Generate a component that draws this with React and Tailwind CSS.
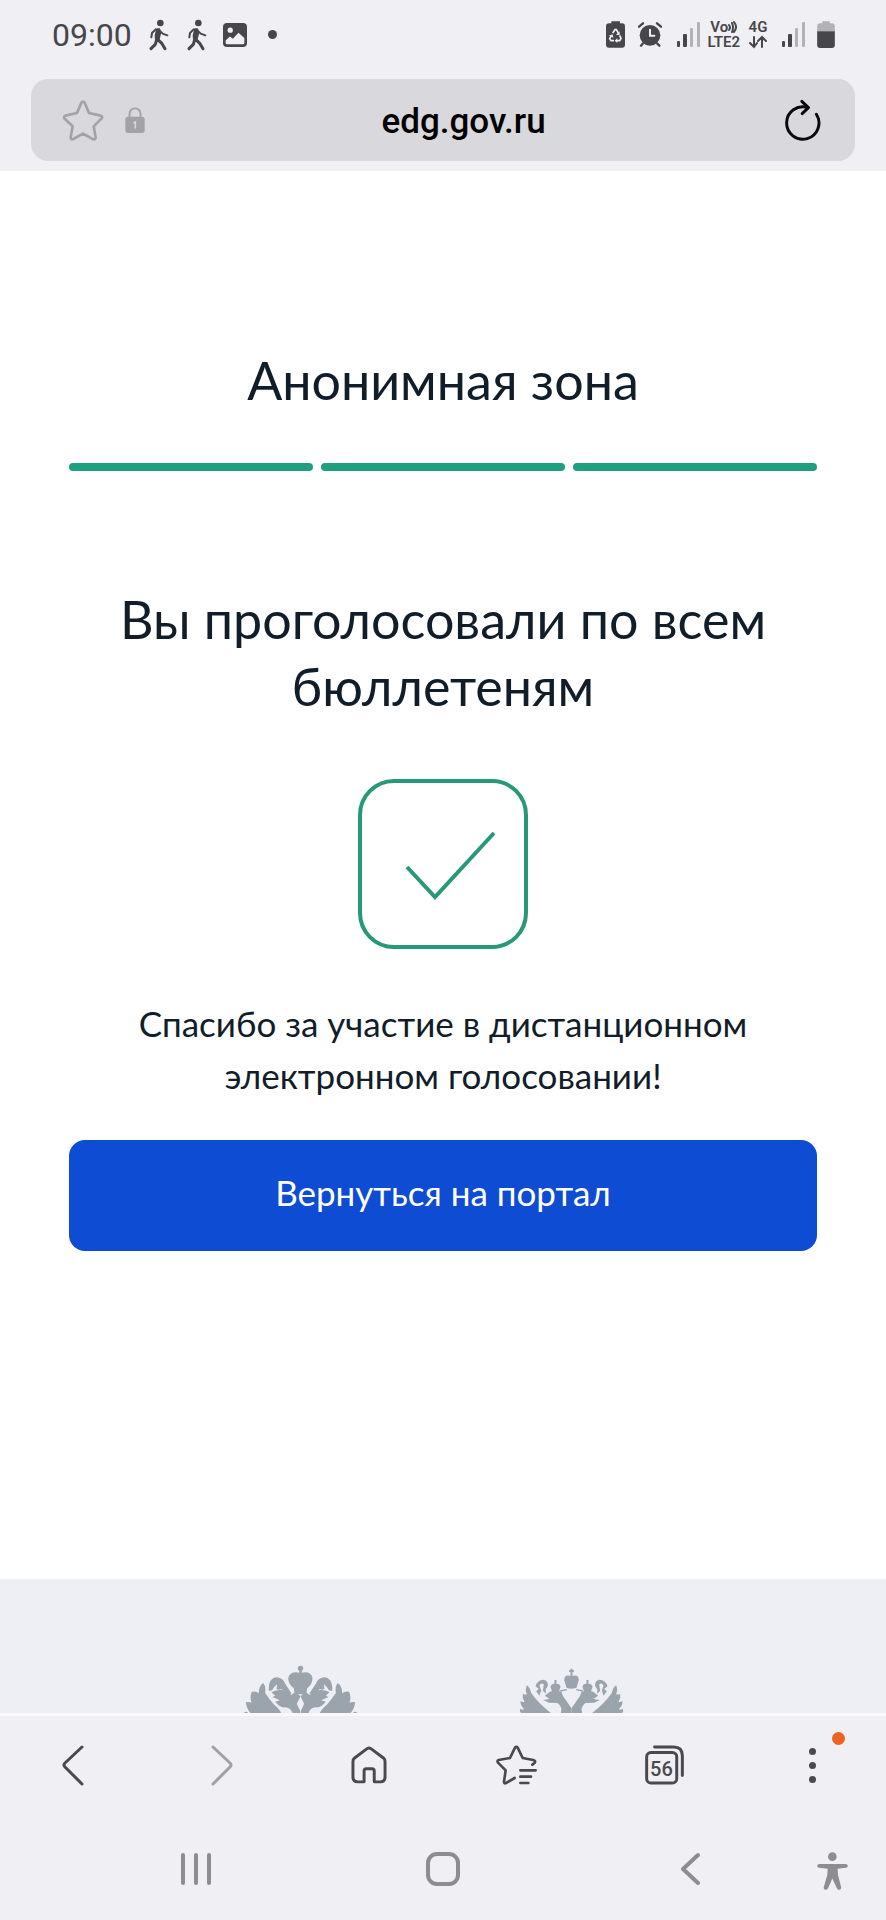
import clsx from 'clsx';

const STEPS = [1, 2, 3];

function WalkIcon() {
  return (
    <svg viewBox="440 51 63 99" className="w-[21px] h-[33px]" fill="none" stroke="#47464b" strokeLinecap="round" strokeLinejoin="round">
      <circle cx="477" cy="66" r="10" fill="#47464b" stroke="none" />
      <path d="M467 85 L474 85 L476 98 L472 115 L464 116 L463 104Z" fill="#47464b" strokeWidth="6" />
      <path d="M463 85 L452 96 L450 109 M476 90 L484 98 L498 103" strokeWidth="6" />
      <path d="M466 116 L462 130 L449 143 M469 115 L482 128 L491 143" strokeWidth="9" />
    </svg>
  );
}

function PictureIcon() {
  return (
    <svg viewBox="666 66 73 73" className="w-6 h-6">
      <rect x="666" y="66" width="73" height="73" rx="12" fill="#47464b" />
      <circle cx="688" cy="88" r="8" fill="#f0eff4" />
      <path d="M674 119 L687 107 L696 114 L713 96 L731 112 V126 Q731 131 726 131 H679 Q674 131 674 126Z" fill="#f0eff4" />
    </svg>
  );
}

function BatterySaverIcon() {
  return (
    <svg viewBox="488 62 57 81" className="w-[19px] h-[27px]">
      <path d="M504 63 H530 V69 H536 Q545 69 545 79 V133 Q545 142 536 142 H497 Q488 142 488 133 V79 Q488 69 497 69 H504Z" fill="#47464b" />
      <g fill="none" stroke="#f0eff4" strokeWidth="5">
        <path d="M508 98 L515 88 H519 L525 98" />
        <path d="M529 105 L533 114 L529 121 H519" />
        <path d="M512 121 H503 L499 115 L504 106" />
      </g>
      <path d="M529 93 V104 H518Z M522 114 V128 L514 121Z M497 106 L508 102 L510 112Z" fill="#f0eff4" />
    </svg>
  );
}

function AlarmIcon() {
  return (
    <svg viewBox="585 65 72 75" className="w-6 h-[25px]" fill="none" strokeLinecap="round">
      <circle cx="621" cy="105" r="31" fill="#47464b" />
      <path d="M588 79 L600 69 M654 79 L642 69 M599 130 L594 136 M643 130 L649 136" stroke="#47464b" strokeWidth="7" />
      <path d="M621 88 V106 H634" stroke="#f0eff4" strokeWidth="6" />
    </svg>
  );
}

function SignalIcon() {
  return (
    <svg viewBox="0 0 23 25" className="w-[23px] h-[25px]">
      <rect x="0" y="19" width="3" height="6" rx="1" fill="#47464b" />
      <rect x="6" y="12" width="4" height="13" rx="1" fill="#47464b" />
      <rect x="13" y="6" width="3" height="19" rx="1" fill="#b3b2b7" />
      <rect x="20" y="0" width="3" height="25" rx="1" fill="#b3b2b7" />
    </svg>
  );
}

function BatteryIcon() {
  return (
    <svg viewBox="1122 62 53 81" className="w-[18px] h-[27px]">
      <path d="M1137 63 H1160 V69 H1166 Q1175 69 1175 78 V93 H1122 V78 Q1122 69 1131 69 H1137Z" fill="#b3b2b7" />
      <path d="M1122 93 H1175 V134 Q1175 143 1166 143 H1131 Q1122 143 1122 134Z" fill="#47464b" />
    </svg>
  );
}

function StatusBar() {
  return (
    <div className="flex items-center justify-between h-[69px] pl-[52px] pr-[51px] text-[#47464b]">
      <div className="flex items-center">
        <span className="text-[32px] leading-8 mr-4">09:00</span>
        <span className="flex gap-[17px]">
          <WalkIcon />
          <WalkIcon />
        </span>
        <span className="ml-4 mr-[21px]">
          <PictureIcon />
        </span>
        <span className="w-[9px] h-[9px] rounded-full bg-[#47464b]" />
      </div>
      <div className="flex items-center">
        <BatterySaverIcon />
        <span className="ml-[13px] mr-[15px]">
          <AlarmIcon />
        </span>
        <SignalIcon />
        <span className="flex flex-col items-center ml-[7px] mr-2 text-[15px] leading-[15px] font-semibold">
          <span className="flex items-center">
            Vo
            <svg viewBox="0 0 9 12" className="w-[9px] h-3" fill="none" stroke="#47464b" strokeLinecap="round">
              <path d="M1 4 Q3 6.500 1 9 M4 2 Q6 6.500 4 11 M6 1 Q10 6 6 11" strokeWidth="2" />
            </svg>
          </span>
          <span>LTE2</span>
        </span>
        <span className="flex flex-col items-center mr-[14px] text-[15px] leading-[15px] font-semibold">
          4G
          <svg viewBox="0 0 20 14" className="w-5 h-[14px]" fill="none" stroke="#47464b" strokeWidth="2" strokeLinecap="round">
            <path d="M6 2 V12 M2 8 L6 12 L9 8 M14 12 V2 M10 6 L14 2 L18 6" />
          </svg>
        </span>
        <SignalIcon />
        <span className="ml-3">
          <BatteryIcon />
        </span>
      </div>
    </div>
  );
}

function AddressBar() {
  return (
    <div className="flex items-center h-[82px] mx-[31px] pl-[31px] pr-[34px] rounded-[17px] bg-[#d9d8dd]">
      <div className="flex flex-1 items-center gap-[21px]">
        <button aria-label="Добавить в закладки">
          <svg viewBox="184 298 126 123" className="w-[42px] h-[41px]" fill="none" stroke="#a3a2a7" strokeWidth="8" strokeLinejoin="round">
            <path d="M242 306 Q247 299 252 306 L265 337 L300 345 Q308 349 302 354 L279 377 L285 411 Q284 418 276 415 L247 399 L218 415 Q210 418 210 410 L216 377 L192 354 Q187 348 194 345 L229 337Z" />
          </svg>
        </button>
        <svg viewBox="371 320 62 80" className="w-5 h-[26px]">
          <path d="M385 354 V342 Q386 324 402 324 Q418 324 419 342 V354" fill="none" stroke="#a3a2a7" strokeWidth="6" />
          <rect x="372" y="350" width="60" height="50" rx="8" fill="#a3a2a7" />
          <path d="M397 369 L403 366 V386" fill="none" stroke="#d9d8dd" strokeWidth="5" />
        </svg>
      </div>
      <span className="pl-11 pt-1 text-[35px] leading-10 font-medium text-black">edg.gov.ru</span>
      <div className="flex flex-1 justify-end">
        <button aria-label="Обновить">
          <svg viewBox="1027 291 109 128" className="w-9 h-[43px]" fill="none" stroke="#0a0a0a" strokeWidth="9" strokeLinecap="round" strokeLinejoin="round">
            <path d="M1122 336 A49 49 0 1 1 1096 316" />
            <path d="M1078 297 L1098 316 L1079 334" />
          </svg>
        </button>
      </div>
    </div>
  );
}

function ForeignCommissionEmblem() {
  const half = (
    <>
      <path d="M240 218 H148 Q136 206 134 186 Q145 183 151 188 Q145 169 152 154 Q164 151 173 159 Q172 139 186 128 Q195 137 192 158 Q205 178 219 193 Q235 206 240 218Z" />
      <path d="M128 218 Q134 210 141 218Z" />
      <path d="M203 152 Q200 113 228 111 Q246 114 252 130 L272 160 L258 160 L240 146 Q234 151 226 146 L228 132 Q217 140 213 150Z" />
      <path d="M211 156 Q224 148 240 149 Q260 150 270 164 L284 154 L298 168 L287 190 L297 212 V218 H274 Q268 202 252 201 Q242 203 232 195 L222 184 L236 180 L214 170 L222 166Z" />
    </>
  );
  return (
    <svg viewBox="126 74 344 144" className="w-[115px] h-12" fill="#9ba4ac">
      {half}
      <g transform="translate(596 0) scale(-1 1)">{half}</g>
      <circle cx="298" cy="84" r="8" />
      <path d="M294 90 H302 V97 Q330 92 334 114 Q333 134 318 144 L316 158 Q298 166 280 158 L278 144 Q262 134 261 114 Q266 92 294 97Z" />
    </svg>
  );
}

function EagleEmblem() {
  const half = (
    <>
      <path d="M1050 218 H960 Q955 212 958 205 Q966 210 970 206 Q958 196 959 182 Q967 187 971 184 Q963 172 966 160 Q973 164 978 162 Q972 148 978 135 Q988 142 991 158 Q1012 188 1050 218Z" />
      <path d="M1004 138 Q1010 118 1028 118 Q1043 121 1041 137 L1034 148 L1036 160 L1026 152 L1029 132 Q1020 126 1016 136 L1021 150 L1016 166 L1006 153 L1014 146Z" />
      <path d="M1061 119 H1067 V130 Q1078 130 1079 139 L1074 155 H1054 L1049 139 Q1051 130 1061 130Z" />
      <path d="M1032 166 L1047 154 Q1064 148 1082 154 L1086 166 Q1096 180 1112 204 V218 H1080 Q1086 200 1070 188 L1044 187 L1027 179 L1046 176Z" />
    </>
  );
  return (
    <svg viewBox="955 83 314 135" className="w-[105px] h-[45px]" fill="#9ba4ac">
      {half}
      <g transform="translate(2224 0) scale(-1 1)">{half}</g>
      <path d="M1109 85 H1115 V89 H1119 V95 H1115 V107 Q1133 102 1134 119 L1127 142 Q1112 148 1097 142 L1090 119 Q1091 102 1109 107 V95 H1105 V89 H1109Z" />
      <path d="M1078 152 L1098 148 M1146 152 L1126 148" stroke="#9ba4ac" strokeWidth="4" />
    </svg>
  );
}

function BrowserToolbar() {
  const slot = 'flex justify-center items-center';
  return (
    <nav className="grid grid-cols-6 h-[98px] shrink-0">
      <button className={slot} aria-label="Назад">
        <svg viewBox="0 0 24 42" className="w-6 h-[42px]" fill="none" stroke="#4a494e" strokeWidth="3" strokeLinecap="round" strokeLinejoin="round">
          <path d="M20 3 L3 19 Q1 21 3 23 L20 40" />
        </svg>
      </button>
      <button className={slot} aria-label="Вперёд" disabled>
        <svg viewBox="0 0 24 42" className="w-6 h-[42px]" fill="none" stroke="#a1a0a5" strokeWidth="3" strokeLinecap="round" strokeLinejoin="round">
          <path d="M4 3 L21 19 Q23 21 21 23 L4 40" />
        </svg>
      </button>
      <button className={slot} aria-label="Домой">
        <svg viewBox="1054 108 110 115" className="w-9 h-[38px]" fill="none" stroke="#4a494e" strokeWidth="9" strokeLinejoin="round">
          <path d="M1101 117 Q1109 110 1117 117 L1153 144 Q1158 148 1158 155 V202 Q1158 217 1144 217 H1125 V184 Q1125 177 1118 177 H1101 Q1094 177 1094 184 V217 H1074 Q1060 217 1060 202 V155 Q1060 148 1065 144Z" />
        </svg>
      </button>
      <button className={slot} aria-label="Закладки">
        <svg viewBox="161 106 123 120" className="w-[41px] h-10" fill="none" stroke="#4a494e" strokeWidth="8" strokeLinecap="round" strokeLinejoin="round">
          <path d="M217 205 L191 220 Q185 223 185 216 L190 182 L167 159 Q163 153 169 151 L203 145 L218 114 Q222 109 226 114 L241 145 L273 151 Q281 153 277 159 L270 165" />
          <path d="M234 182 H280 M234 201 H266 M234 220 H258" />
        </svg>
      </button>
      <button className={slot} aria-label="Вкладки">
        <span className="relative flex">
          <svg viewBox="605 103 118 119" className="w-[39px] h-10" fill="none" stroke="#4a494e" strokeWidth="9" strokeLinecap="round">
            <rect x="610" y="125" width="91" height="92" rx="13" />
            <path d="M634 108 H692 Q718 108 718 134 V194" />
          </svg>
          <span className="absolute left-0 bottom-0 w-[33px] h-8 flex items-center justify-center text-[20px] leading-5 font-medium text-[#4a494e]">56</span>
        </span>
      </button>
      <button className={slot} aria-label="Меню">
        <span className="relative flex flex-col gap-[7px]">
          {[0, 1, 2].map((dot) => (
            <span key={dot} className="w-[7px] h-[7px] rounded-full bg-[#4a494e]" />
          ))}
          <span className="absolute -top-4 left-[23px] w-[13px] h-[13px] rounded-full bg-[#ef6221]" />
        </span>
      </button>
    </nav>
  );
}

function SystemNav() {
  const slot = 'flex justify-center items-center';
  return (
    <nav className="grid grid-cols-[73px_1fr_1fr_1fr_73px] h-[106px] pt-1 shrink-0">
      <span />
      <button className={clsx(slot, 'gap-[9px]')} aria-label="Недавние приложения">
        {[0, 1, 2].map((bar) => (
          <span key={bar} className="w-1 h-8 rounded-full bg-[#8d8c91]" />
        ))}
      </button>
      <button className={slot} aria-label="Главный экран">
        <span className="w-[34px] h-[34px] rounded-[11px] border-4 border-[#8d8c91]" />
      </button>
      <button className={slot} aria-label="Назад">
        <svg viewBox="0 0 20 34" className="w-5 h-[34px]" fill="none" stroke="#8d8c91" strokeWidth="4" strokeLinecap="round" strokeLinejoin="round">
          <path d="M18 3 L3 17 L18 31" />
        </svg>
      </button>
      <button className="flex items-center pl-1 pt-1" aria-label="Специальные возможности">
        <svg viewBox="1122 425 93 115" className="w-[31px] h-[38px]" fill="#8d8c91">
          <circle cx="1168" cy="439" r="13" />
          <path d="M1128 461 H1209 Q1215 462 1215 467 Q1215 472 1209 473 L1184 476 L1185 494 L1195 533 Q1194 540 1188 539 Q1184 540 1182 535 L1168 505 L1155 535 Q1153 540 1148 539 Q1141 539 1142 532 L1153 494 L1154 476 L1128 473 Q1122 472 1122 467 Q1122 462 1128 461Z" />
        </svg>
      </button>
    </nav>
  );
}

export default function App() {
  return (
    <div className="flex flex-col min-h-screen bg-[#f0eff4] font-['Roboto',sans-serif]">
      <header className="pb-[10px] shrink-0">
        <StatusBar />
        <div className="pt-[10px]">
          <AddressBar />
        </div>
      </header>

      <main className="flex-1 bg-white px-[69px] pt-44 pb-20 text-center text-[#111d29] font-['Lato',sans-serif]">
        <h1 className="text-[52px] leading-[67px]">Анонимная зона</h1>
        <div className="flex gap-2 mt-[49px]">
          {STEPS.map((step) => (
            <span key={step} className="flex-1 h-2 rounded-full bg-[#1f9f7f]" />
          ))}
        </div>

        <h2 className="mt-[115px] text-[52px] leading-[67px]">Вы проголосовали по всем бюллетеням</h2>
        <div className="w-[170px] h-[170px] mt-[59px] mx-auto rounded-[36px] border-4 border-[#279879]">
          <svg viewBox="0 0 162 162" className="w-full h-full" fill="none" stroke="#279879" strokeWidth="4">
            <path d="M45 84 L73 114 L132 50" />
          </svg>
        </div>
        <p className="mt-12 text-[35px] leading-[52px]">Спасибо за участие в дистанционном электронном голосовании!</p>
        <button className="w-full h-[111px] mt-[39px] pb-2 rounded-2xl bg-[#0d4cd3] text-[35px] leading-[52px] text-white">
          Вернуться на портал
        </button>
      </main>

      <footer className="flex items-end justify-center gap-[161px] h-[137px] pr-5 shrink-0 bg-[#edeff4] border-b-[3px] border-[#f9f9fc]">
        <ForeignCommissionEmblem />
        <EagleEmblem />
      </footer>

      <BrowserToolbar />
      <SystemNav />
    </div>
  );
}
